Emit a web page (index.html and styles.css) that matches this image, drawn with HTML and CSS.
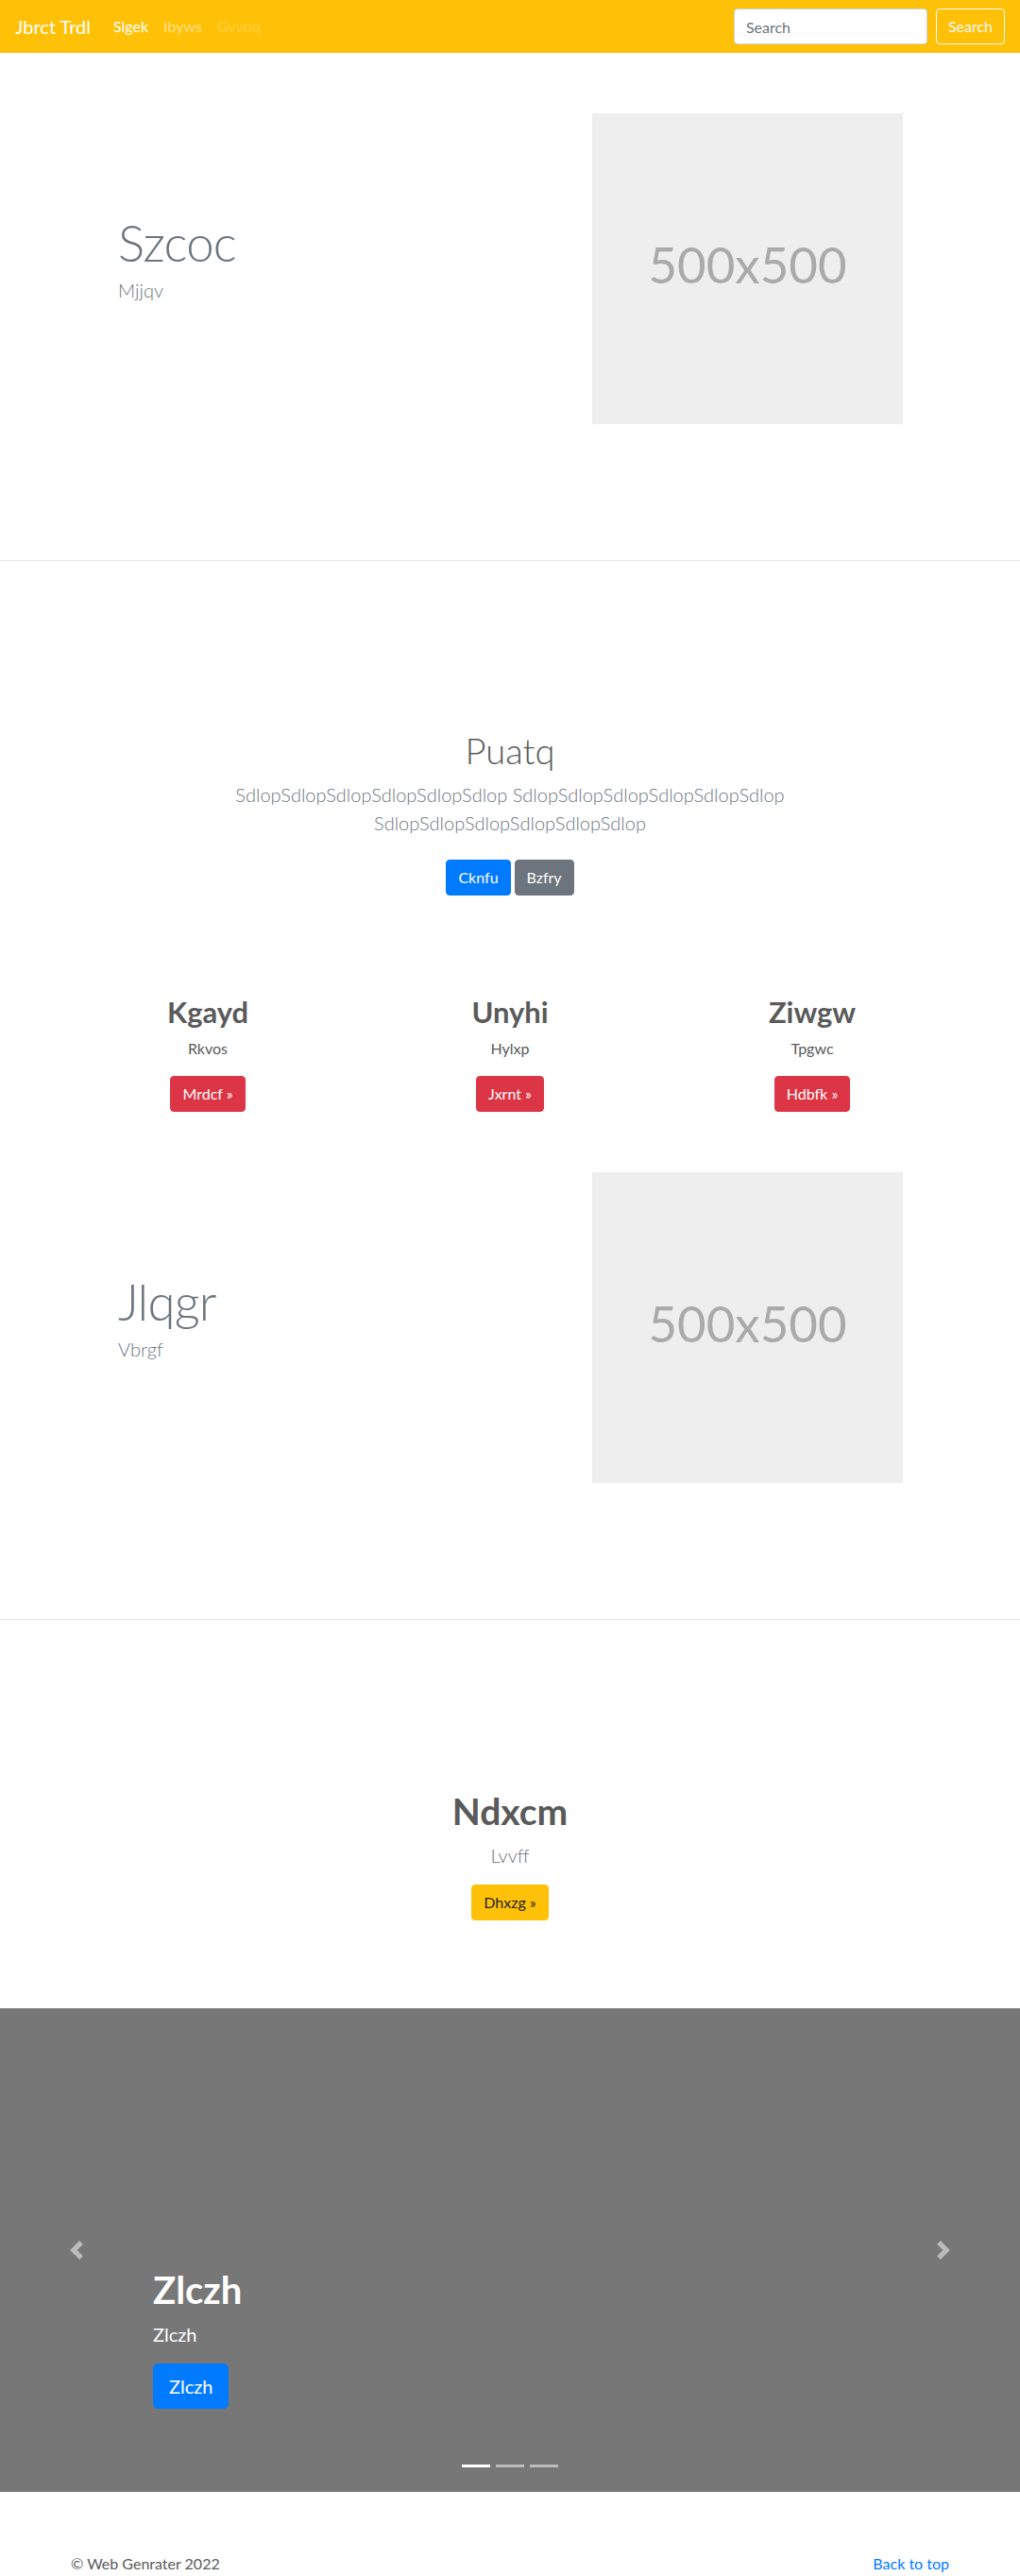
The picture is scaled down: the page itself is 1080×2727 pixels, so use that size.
FILE: index.html
```html
<!DOCTYPE html>
<html lang="en">
<head>
<meta charset="utf-8">
<title>Jbrct Trdl</title>
<link rel="stylesheet" href="styles.css">
</head>
<body>
<header>
  <nav class="navbar">
    <a class="navbar-brand" href="#">Jbrct Trdl</a>
    <ul class="navbar-nav">
      <li><a class="nav-link active" href="#">Slgek</a></li>
      <li><a class="nav-link" href="#">Ibyws</a></li>
      <li><a class="nav-link disabled" href="#">Gvvoq</a></li>
    </ul>
    <form class="search-form">
      <input class="search-input" type="text" placeholder="Search" aria-label="Search">
      <button class="btn btn-outline-light" type="button">Search</button>
    </form>
  </nav>
</header>

<main>
  <section class="featurette">
    <div class="featurette-row">
      <div class="featurette-text">
        <h2 class="featurette-heading">Szcoc</h2>
        <p class="lead text-muted">Mjjqv</p>
      </div>
      <div class="placeholder-img"><span>500x500</span></div>
    </div>
  </section>

  <section class="jumbotron">
    <div class="jumbotron-inner">
      <h1 class="jumbotron-heading">Puatq</h1>
      <p class="lead text-muted">SdlopSdlopSdlopSdlopSdlopSdlop SdlopSdlopSdlopSdlopSdlopSdlop SdlopSdlopSdlopSdlopSdlopSdlop</p>
      <div class="actions">
        <a class="btn btn-primary" href="#">Cknfu</a>
        <a class="btn btn-secondary" href="#">Bzfry</a>
      </div>
    </div>
  </section>

  <section class="marketing">
    <div class="marketing-col">
      <h2>Kgayd</h2>
      <p>Rkvos</p>
      <div><a class="btn btn-danger" href="#">Mrdcf &raquo;</a></div>
    </div>
    <div class="marketing-col">
      <h2>Unyhi</h2>
      <p>Hylxp</p>
      <div><a class="btn btn-danger" href="#">Jxrnt &raquo;</a></div>
    </div>
    <div class="marketing-col">
      <h2>Ziwgw</h2>
      <p>Tpgwc</p>
      <div><a class="btn btn-danger" href="#">Hdbfk &raquo;</a></div>
    </div>
  </section>

  <section class="featurette">
    <div class="featurette-row">
      <div class="featurette-text">
        <h2 class="featurette-heading">Jlqgr</h2>
        <p class="lead text-muted">Vbrgf</p>
      </div>
      <div class="placeholder-img"><span>500x500</span></div>
    </div>
  </section>

  <section class="cta">
    <h1 class="cta-heading">Ndxcm</h1>
    <p class="lead text-muted">Lvvff</p>
    <div><a class="btn btn-warning" href="#">Dhxzg &raquo;</a></div>
  </section>

  <section class="carousel">
    <ol class="carousel-indicators">
      <li class="active"></li>
      <li></li>
      <li></li>
    </ol>
    <div class="carousel-caption">
      <h1>Zlczh</h1>
      <p>Zlczh</p>
      <p><a class="btn btn-lg btn-primary" href="#">Zlczh</a></p>
    </div>
    <a class="carousel-control prev" href="#" aria-label="Previous">
      <svg width="20" height="20" viewBox="0 0 8 8" fill="#fff"><path d="M5.25 0l-4 4 4 4 1.5-1.5L4.25 4l2.5-2.5L5.25 0z"/></svg>
    </a>
    <a class="carousel-control next" href="#" aria-label="Next">
      <svg width="20" height="20" viewBox="0 0 8 8" fill="#fff"><path d="M2.75 0l-1.5 1.5L3.75 4l-2.5 2.5L2.75 8l4-4-4-4z"/></svg>
    </a>
  </section>

  <footer class="footer">
    <p>&copy; Web Genrater 2022</p>
    <p><a href="#">Back to top</a></p>
  </footer>
</main>
</body>
</html>
```

FILE: styles.css
```css
* { box-sizing: border-box; }

body {
  margin: 0;
  font-family: "Lato", "Open Sans", "Liberation Sans", sans-serif;
  font-size: 16px;
  line-height: 1.5;
  color: #5a5a5a;
  background: #fff;
}

h1, h2, p { margin: 0; }
a { text-decoration: none; color: #007bff; }

/* Navbar */
.navbar {
  display: flex;
  align-items: center;
  height: 56px;
  padding: 8px 16px;
  background: #ffc107;
}
.navbar-brand {
  font-size: 20px;
  line-height: 30px;
  color: #fff;
  margin-right: 16px;
}
.navbar-nav {
  display: flex;
  list-style: none;
  margin: 0 auto 0 0;
  padding: 0;
}
.nav-link {
  display: block;
  padding: 8px;
  color: rgba(255, 255, 255, 0.5);
}
.nav-link.active { color: #fff; }
.nav-link.disabled { color: rgba(255, 255, 255, 0.25); }

.search-form { display: flex; align-items: center; }
.search-input {
  width: 205px;
  height: 38px;
  padding: 6px 12px;
  font-family: inherit;
  font-size: 16px;
  color: #495057;
  background: #fff;
  border: 1px solid #ced4da;
  border-radius: 4px;
  margin-right: 9px;
}
.search-input::placeholder { color: #6c757d; }

/* Buttons */
.btn {
  display: inline-block;
  font-family: inherit;
  font-size: 16px;
  line-height: 24px;
  padding: 6px 12px;
  border: 1px solid transparent;
  border-radius: 4px;
  color: #fff;
  text-align: center;
  vertical-align: middle;
}
.btn-outline-light { color: #f8f9fa; border-color: #f8f9fa; background: transparent; }
.btn-primary { background: #007bff; border-color: #007bff; }
.btn-secondary { background: #6c757d; border-color: #6c757d; }
.btn-danger { background: #dc3545; border-color: #dc3545; }
.btn-warning { background: #ffc107; border-color: #ffc107; color: #212529; }
.btn-lg { font-size: 20px; line-height: 30px; padding: 8px 16px; border-radius: 5px; }

.lead { font-size: 20px; font-weight: 300; line-height: 30px; }
.text-muted { color: #6c757d; }

/* Featurette */
.featurette {
  padding: 64px 0 144px;
  border-bottom: 1px solid #e6e6e6;
}
.featurette-row {
  width: 960px;
  margin: 0 auto;
  display: flex;
  align-items: center;
}
.featurette-text {
  flex: 1;
  padding-left: 65px;
}
.featurette-heading {
  font-size: 52.8px;
  font-weight: 300;
  line-height: 1;
  letter-spacing: -0.8px;
  color: #6c757d;
  margin-bottom: 8px;
}
.featurette-text .lead { margin-bottom: 16px; }
.placeholder-img {
  width: 329px;
  height: 329px;
  margin-right: 64px;
  background: #eee;
  color: #aaa;
  font-size: 52.8px;
  line-height: 1;
  display: flex;
  align-items: center;
  justify-content: center;
}
.placeholder-img span { margin-top: -8px; }

/* Jumbotron */
.jumbotron {
  padding-top: 178px;
  text-align: center;
}
.jumbotron-inner {
  max-width: 640px;
  margin: 0 auto;
  padding: 0 15px;
}
.jumbotron-heading {
  font-size: 38.2px;
  font-weight: 300;
  line-height: 1.2;
  margin-bottom: 8px;
}
.jumbotron .lead { margin-bottom: 24px; }
.actions {
  display: flex;
  justify-content: center;
  gap: 4px;
}

/* Marketing */
.marketing {
  width: 960px;
  margin: 105px auto 0;
  display: grid;
  grid-template-columns: repeat(3, 1fr);
  text-align: center;
}
.marketing h2 {
  font-size: 30.9px;
  font-weight: 700;
  line-height: 1.2;
  margin-bottom: 8px;
}
.marketing p { margin: 0 12px 17px; }

/* CTA */
.cta {
  padding: 179px 0 93px;
  text-align: center;
}
.cta-heading {
  font-size: 39px;
  font-weight: 700;
  line-height: 1.2;
  margin-bottom: 8px;
}
.cta .lead { margin-bottom: 16px; }

/* Carousel */
.carousel {
  position: relative;
  height: 512px;
  margin-bottom: 64px;
  background: #777;
}
.carousel-caption {
  position: absolute;
  left: 15%;
  right: 15%;
  bottom: 52px;
  padding: 20px 0;
  color: #fff;
  text-align: left;
}
.carousel-caption h1 {
  font-size: 40px;
  font-weight: 700;
  line-height: 1.2;
  margin-bottom: 8px;
}
.carousel-caption p {
  font-size: 20px;
  line-height: 30px;
  margin-bottom: 16px;
}
.carousel-control {
  position: absolute;
  top: 0;
  bottom: 0;
  width: 15%;
  display: flex;
  align-items: center;
  justify-content: center;
  opacity: 0.5;
}
.carousel-control.prev { left: 0; }
.carousel-control.next { right: 0; }
.carousel-indicators {
  position: absolute;
  left: 0;
  right: 0;
  bottom: 0;
  margin: 0 0 16px;
  padding: 0;
  list-style: none;
  display: flex;
  justify-content: center;
}
.carousel-indicators li {
  width: 30px;
  height: 3px;
  margin: 10px 3px;
  background: #fff;
  opacity: 0.5;
}
.carousel-indicators li.active { opacity: 1; }

/* Footer */
.footer {
  width: 960px;
  margin: 0 auto;
  padding: 0 15px;
  display: flex;
  justify-content: space-between;
}
.footer p { margin-bottom: 16px; }
```
